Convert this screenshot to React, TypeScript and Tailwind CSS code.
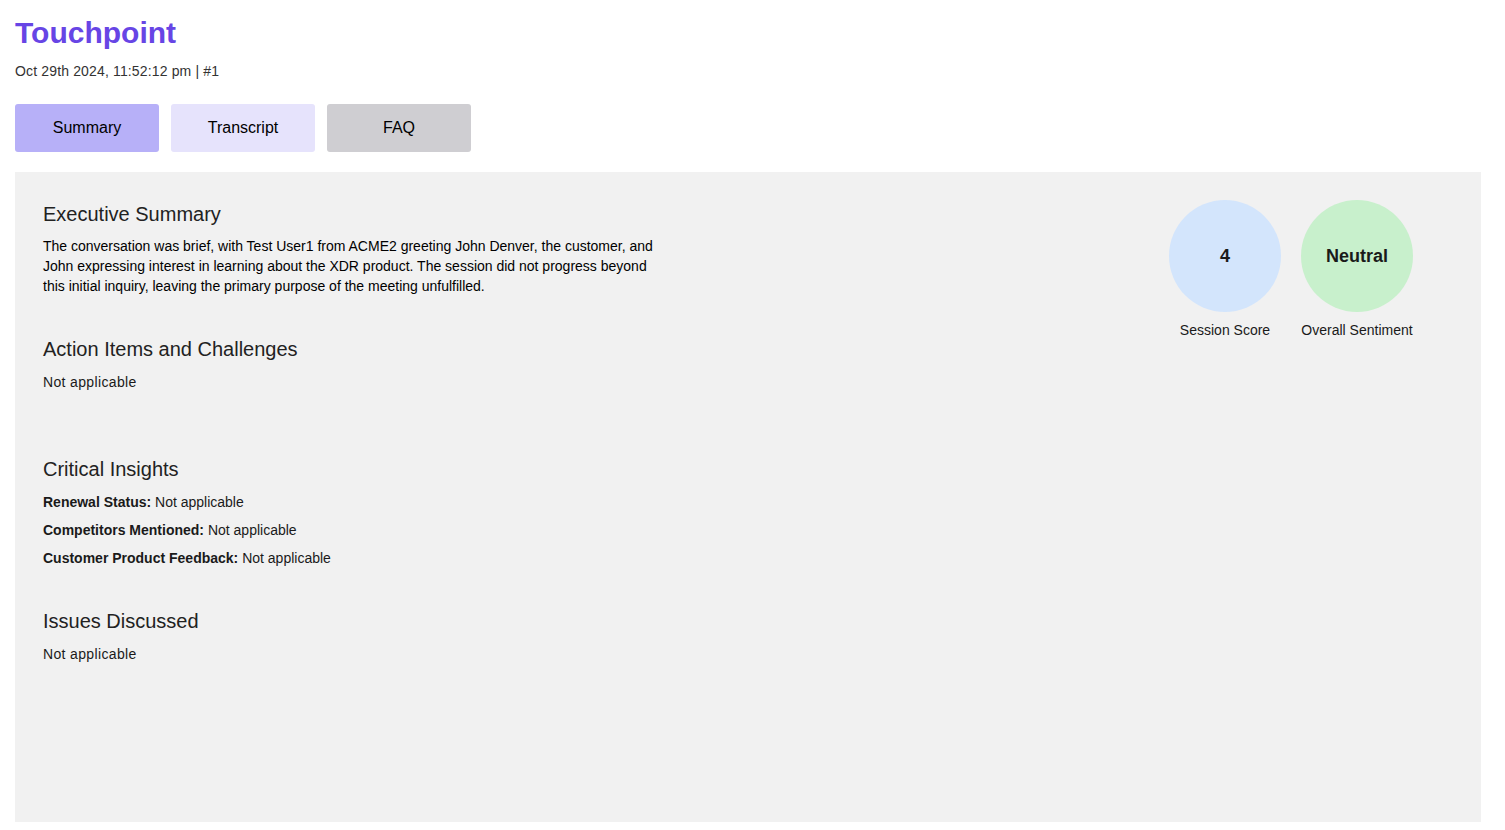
export default function App() {
  const insights = [
    { label: "Renewal Status:", value: "Not applicable" },
    { label: "Competitors Mentioned:", value: "Not applicable" },
    { label: "Customer Product Feedback:", value: "Not applicable" },
  ]

  return (
    <div className="min-h-screen bg-white pl-[15px] pr-6 pt-[15px] pb-2 font-['Liberation_Sans',Arial,sans-serif] text-[#222]">
      <h1 className="text-[30px] font-bold leading-9 text-[#6745e5]">Touchpoint</h1>
      <p className="mt-[10px] text-sm leading-5 tracking-[0.15px] text-[#333]">Oct 29th 2024, 11:52:12 pm | #1</p>

      <div className="mt-[23px] flex gap-3">
        <button className="h-12 w-36 rounded-[3px] bg-[#b7b0f8] text-base text-black">Summary</button>
        <button className="h-12 w-36 rounded-[3px] bg-[#e6e3fc] text-base text-black">Transcript</button>
        <button className="h-12 w-36 rounded-[3px] bg-[#cfced2] text-base text-black">FAQ</button>
      </div>

      <div className="mt-5 flex h-[650px] justify-between bg-[#f1f1f1] pt-7 pl-7 pr-[68px]">
        <div className="w-[620px]">
          <section>
            <h2 className="text-xl leading-7 text-[#222]">Executive Summary</h2>
            <p className="mt-2 text-sm leading-5 text-black">
              The conversation was brief, with Test User1 from ACME2 greeting John Denver, the customer, and John
              expressing interest in learning about the XDR product. The session did not progress beyond this initial
              inquiry, leaving the primary purpose of the meeting unfulfilled.
            </p>
          </section>

          <section className="mt-[39px]">
            <h2 className="text-xl leading-7 text-[#222]">Action Items and Challenges</h2>
            <p className="mt-[9px] text-sm leading-5 tracking-[0.35px] text-[#1a1a1a]">Not applicable</p>
          </section>

          <section className="mt-[63px]">
            <h2 className="text-xl leading-7 text-[#222]">Critical Insights</h2>
            <div className="mt-[9px] flex flex-col gap-2">
              {insights.map((item) => (
                <p key={item.label} className="text-sm leading-5 text-[#1a1a1a]">
                  <span className="font-bold">{item.label}</span> {item.value}
                </p>
              ))}
            </div>
          </section>

          <section className="mt-[39px]">
            <h2 className="text-xl leading-7 text-[#222]">Issues Discussed</h2>
            <p className="mt-[9px] text-sm leading-5 tracking-[0.35px] text-[#1a1a1a]">Not applicable</p>
          </section>
        </div>

        <div className="flex gap-5">
          <div className="flex flex-col items-center">
            <div className="flex h-28 w-28 items-center justify-center rounded-full bg-[#d3e5fc] text-lg font-bold text-[#1a1a1a]">
              4
            </div>
            <span className="mt-2 text-sm leading-5 text-[#1a1a1a]">Session Score</span>
          </div>
          <div className="flex flex-col items-center">
            <div className="flex h-28 w-28 items-center justify-center rounded-full bg-[#c8f0cc] text-lg font-bold text-[#1a1a1a]">
              Neutral
            </div>
            <span className="mt-2 text-sm leading-5 text-[#1a1a1a]">Overall Sentiment</span>
          </div>
        </div>
      </div>
    </div>
  )
}
